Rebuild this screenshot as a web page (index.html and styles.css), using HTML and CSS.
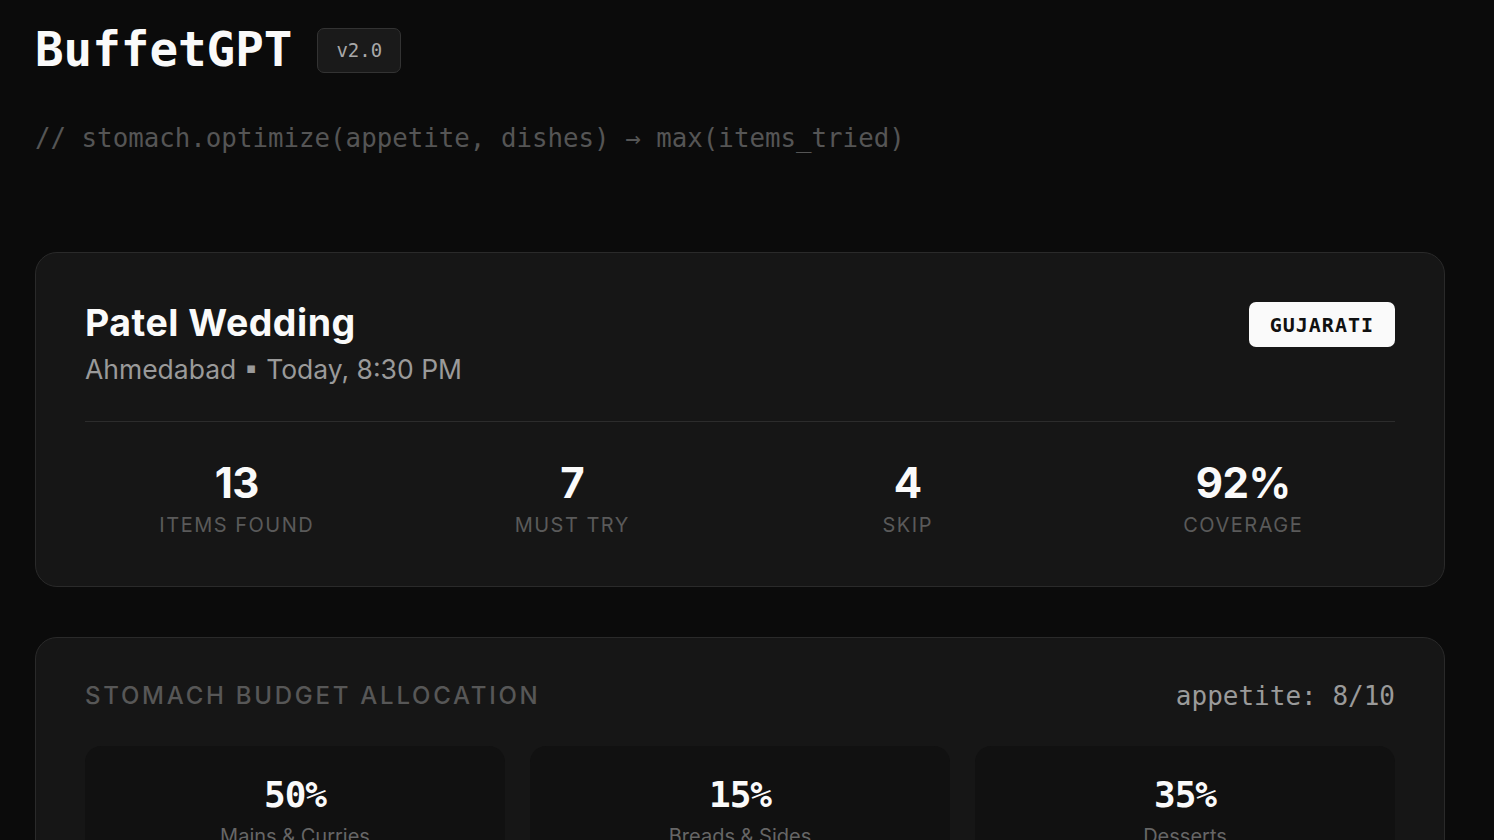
FILE: index.html
```html
<!DOCTYPE html>
<html lang="en">
<head>
<meta charset="utf-8">
<title>BuffetGPT</title>
<link rel="stylesheet" href="styles.css">
</head>
<body>
<main class="page">
  <header class="header">
    <h1 class="logo">BuffetGPT</h1>
    <span class="version">v2.0</span>
  </header>
  <p class="tagline">// stomach.optimize(appetite, dishes) → max(items_tried)</p>

  <section class="card event">
    <div class="event-top">
      <div class="event-info">
        <h2 class="event-title">Patel Wedding</h2>
        <p class="event-meta">Ahmedabad ▪ Today, 8:30 PM</p>
      </div>
      <span class="cuisine">GUJARATI</span>
    </div>
    <div class="stats">
      <div class="stat"><div class="stat-num">13</div><div class="stat-label">Items Found</div></div>
      <div class="stat"><div class="stat-num">7</div><div class="stat-label">Must Try</div></div>
      <div class="stat"><div class="stat-num">4</div><div class="stat-label">Skip</div></div>
      <div class="stat"><div class="stat-num">92%</div><div class="stat-label">Coverage</div></div>
    </div>
  </section>

  <section class="card budget">
    <div class="budget-head">
      <h3 class="budget-title">Stomach Budget Allocation</h3>
      <span class="appetite">appetite: 8/10</span>
    </div>
    <div class="alloc">
      <div class="alloc-item"><div class="alloc-pct">50%</div><div class="alloc-label">Mains &amp; Curries</div></div>
      <div class="alloc-item"><div class="alloc-pct">15%</div><div class="alloc-label">Breads &amp; Sides</div></div>
      <div class="alloc-item"><div class="alloc-pct">35%</div><div class="alloc-label">Desserts</div></div>
    </div>
  </section>
</main>
</body>
</html>
```

FILE: styles.css
```css
* { box-sizing: border-box; }
html, body {
  margin: 0;
  padding: 0;
  background: #0b0b0b;
  color: #fff;
  font-family: "Inter", "Noto Sans", sans-serif;
  overflow: hidden;
}
.page {
  width: 1410px;
  margin-left: 35px;
  padding-top: 26px;
}
.header {
  display: flex;
  align-items: center;
  gap: 25px;
}
.logo {
  margin: 0;
  font-family: "DejaVu Sans Mono", "Liberation Mono", monospace;
  font-weight: 700;
  font-size: 47.5px;
  line-height: 48px;
  letter-spacing: 0;
  color: #fafafa;
}
.version {
  display: inline-flex;
  align-items: center;
  height: 45px;
  padding: 0 18px;
  background: #1a1a1a;
  border: 1px solid #333;
  border-radius: 7px;
  font-family: "DejaVu Sans Mono", monospace;
  font-size: 19px;
  color: #a8a8a8;
}
.tagline {
  margin: 49px 0 0;
  font-family: "DejaVu Sans Mono", "Liberation Mono", monospace;
  font-size: 25.8px;
  line-height: 31px;
  color: #555;
}
.card {
  background: #161616;
  border: 1px solid #2a2a2a;
  border-radius: 22px;
  padding: 48px 49px 49px;
}
.event { margin-top: 98px; }
.event-top {
  display: flex;
  justify-content: space-between;
  align-items: flex-start;
  padding-bottom: 36px;
  border-bottom: 1px solid #2c2c2c;
}
.event-title {
  margin: 0;
  font-size: 37.5px;
  line-height: 43px;
  font-weight: 700;
  letter-spacing: 0.5px;
  color: #fafafa;
}
.event-meta {
  margin: 10px 0 0;
  font-size: 26.5px;
  line-height: 31px;
  color: #9a9a9a;
}
.cuisine {
  margin-top: 1px;
  height: 45px;
  display: inline-flex;
  align-items: center;
  padding: 0 21px;
  background: #fafafa;
  border-radius: 7px;
  color: #111;
  font-family: "DejaVu Sans Mono", monospace;
  font-weight: 700;
  font-size: 20px;
  letter-spacing: 1px;
}
.stats {
  display: grid;
  grid-template-columns: repeat(4, 1fr);
  gap: 32px;
  padding-top: 38px;
}
.stat { text-align: center; }
.stat-num {
  font-size: 42px;
  line-height: 46px;
  font-weight: 700;
  letter-spacing: -0.5px;
  color: #fafafa;
}
.stat-label {
  margin-top: 7px;
  font-size: 20px;
  line-height: 24px;
  text-transform: uppercase;
  letter-spacing: 1.5px;
  color: #5a5a5a;
}
.budget { margin-top: 50px; padding-top: 43px; }
.budget-head {
  display: flex;
  justify-content: space-between;
  align-items: center;
}
.budget-title {
  margin: 0;
  font-size: 24px;
  line-height: 30px;
  font-weight: 500;
  text-transform: uppercase;
  letter-spacing: 2.75px;
  color: #575757;
}
.appetite {
  font-family: "DejaVu Sans Mono", monospace;
  font-size: 26px;
  line-height: 30px;
  color: #9a9a9a;
}
.alloc {
  margin-top: 35px;
  display: grid;
  grid-template-columns: repeat(3, 1fr);
  gap: 25px;
}
.alloc-item {
  background: #111;
  border-radius: 16px;
  padding: 28px 20px 28px;
  text-align: center;
}
.alloc-pct {
  font-family: "DejaVu Sans Mono", monospace;
  font-weight: 700;
  font-size: 36px;
  line-height: 42px;
  letter-spacing: -1px;
  color: #fafafa;
}
.alloc-label {
  margin-top: 8px;
  font-size: 20px;
  line-height: 24px;
  color: #666;
}
```
